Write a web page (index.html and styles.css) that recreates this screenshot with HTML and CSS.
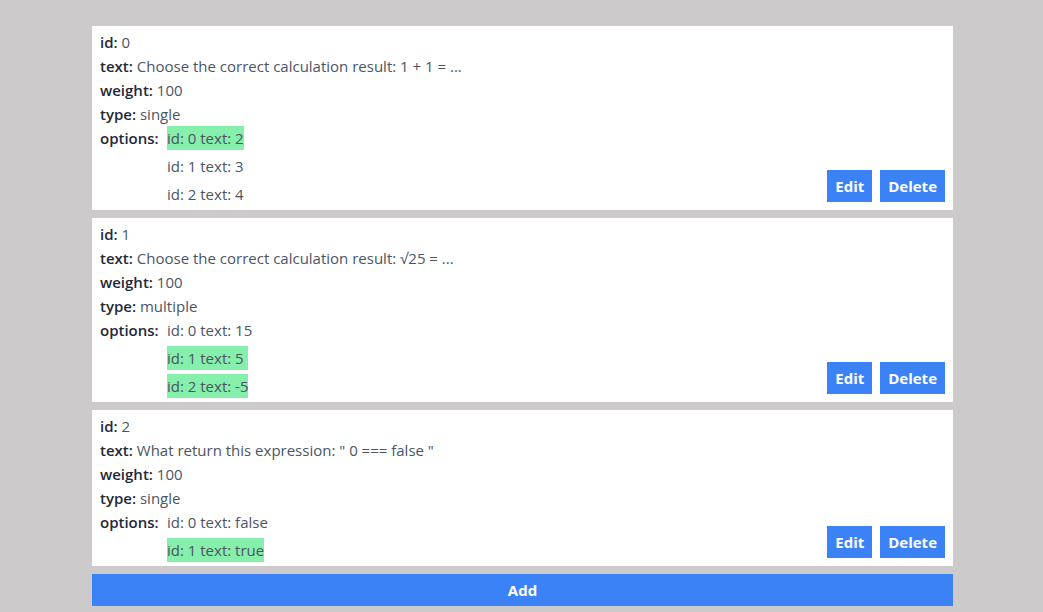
FILE: index.html
```html
<!DOCTYPE html>
<html>
<head>
<meta charset="utf-8">
<link rel="stylesheet" href="styles.css">
</head>
<body>
<div class="list">
  <div class="card">
    <div class="info">
      <div class="row"><span class="label">id:</span> 0</div>
      <div class="row"><span class="label">text:</span> Choose the correct calculation result: 1 + 1 = ...</div>
      <div class="row"><span class="label">weight:</span> 100</div>
      <div class="row"><span class="label">type:</span> single</div>
      <div class="options">
        <span class="label opt-label">options:</span>
        <div class="opt-list">
          <div class="opt correct">id: 0 text: 2</div>
          <div class="opt">id: 1 text: 3</div>
          <div class="opt">id: 2 text: 4</div>
        </div>
      </div>
    </div>
    <div class="actions"><button class="btn">Edit</button><button class="btn">Delete</button></div>
  </div>
  <div class="card">
    <div class="info">
      <div class="row"><span class="label">id:</span> 1</div>
      <div class="row"><span class="label">text:</span> Choose the correct calculation result: √25 = ...</div>
      <div class="row"><span class="label">weight:</span> 100</div>
      <div class="row"><span class="label">type:</span> multiple</div>
      <div class="options">
        <span class="label opt-label">options:</span>
        <div class="opt-list">
          <div class="opt">id: 0 text: 15</div>
          <div class="opt correct">id: 1 text: 5&nbsp;</div>
          <div class="opt correct">id: 2 text: -5</div>
        </div>
      </div>
    </div>
    <div class="actions"><button class="btn">Edit</button><button class="btn">Delete</button></div>
  </div>
  <div class="card">
    <div class="info">
      <div class="row"><span class="label">id:</span> 2</div>
      <div class="row"><span class="label">text:</span> What return this expression: " 0 === false "</div>
      <div class="row"><span class="label">weight:</span> 100</div>
      <div class="row"><span class="label">type:</span> single</div>
      <div class="options">
        <span class="label opt-label">options:</span>
        <div class="opt-list">
          <div class="opt">id: 0 text: false</div>
          <div class="opt correct">id: 1 text: true</div>
        </div>
      </div>
    </div>
    <div class="actions"><button class="btn">Edit</button><button class="btn">Delete</button></div>
  </div>
  <button class="btn add">Add</button>
</div>
</body>
</html>
```
FILE: styles.css
```css
html, body {
  margin: 0;
  padding: 0;
}
body {
  background: #cccaca;
  font-family: "Segoe UI", "Open Sans", sans-serif;
  font-size: 15px;
  line-height: 24px;
  color: #4b5563;
}
.list {
  width: 861px;
  margin: 0 0 0 92px;
  padding-top: 26px;
  display: flex;
  flex-direction: column;
  gap: 8px;
}
.card {
  background: #fff;
  padding: 4px 8px;
  display: flex;
  justify-content: space-between;
  align-items: flex-end;
}
.label {
  font-weight: 600;
  color: #1f2937;
}
.options {
  display: flex;
}
.opt-label {
  width: 67px;
  flex: none;
}
.opt-list {
  display: flex;
  flex-direction: column;
  align-items: flex-start;
  gap: 4px;
}
.opt {
  height: 24px;
}
.correct {
  background: #86efac;
}
.actions {
  display: flex;
  gap: 8px;
  margin-bottom: 4px;
}
.btn {
  font-family: inherit;
  font-size: 15px;
  font-weight: 700;
  color: #fff;
  background: #3b82f6;
  border: none;
  height: 32px;
  padding: 0 8px;
  line-height: 32px;
  margin: 0;
}
.add {
  width: 100%;
}
```
